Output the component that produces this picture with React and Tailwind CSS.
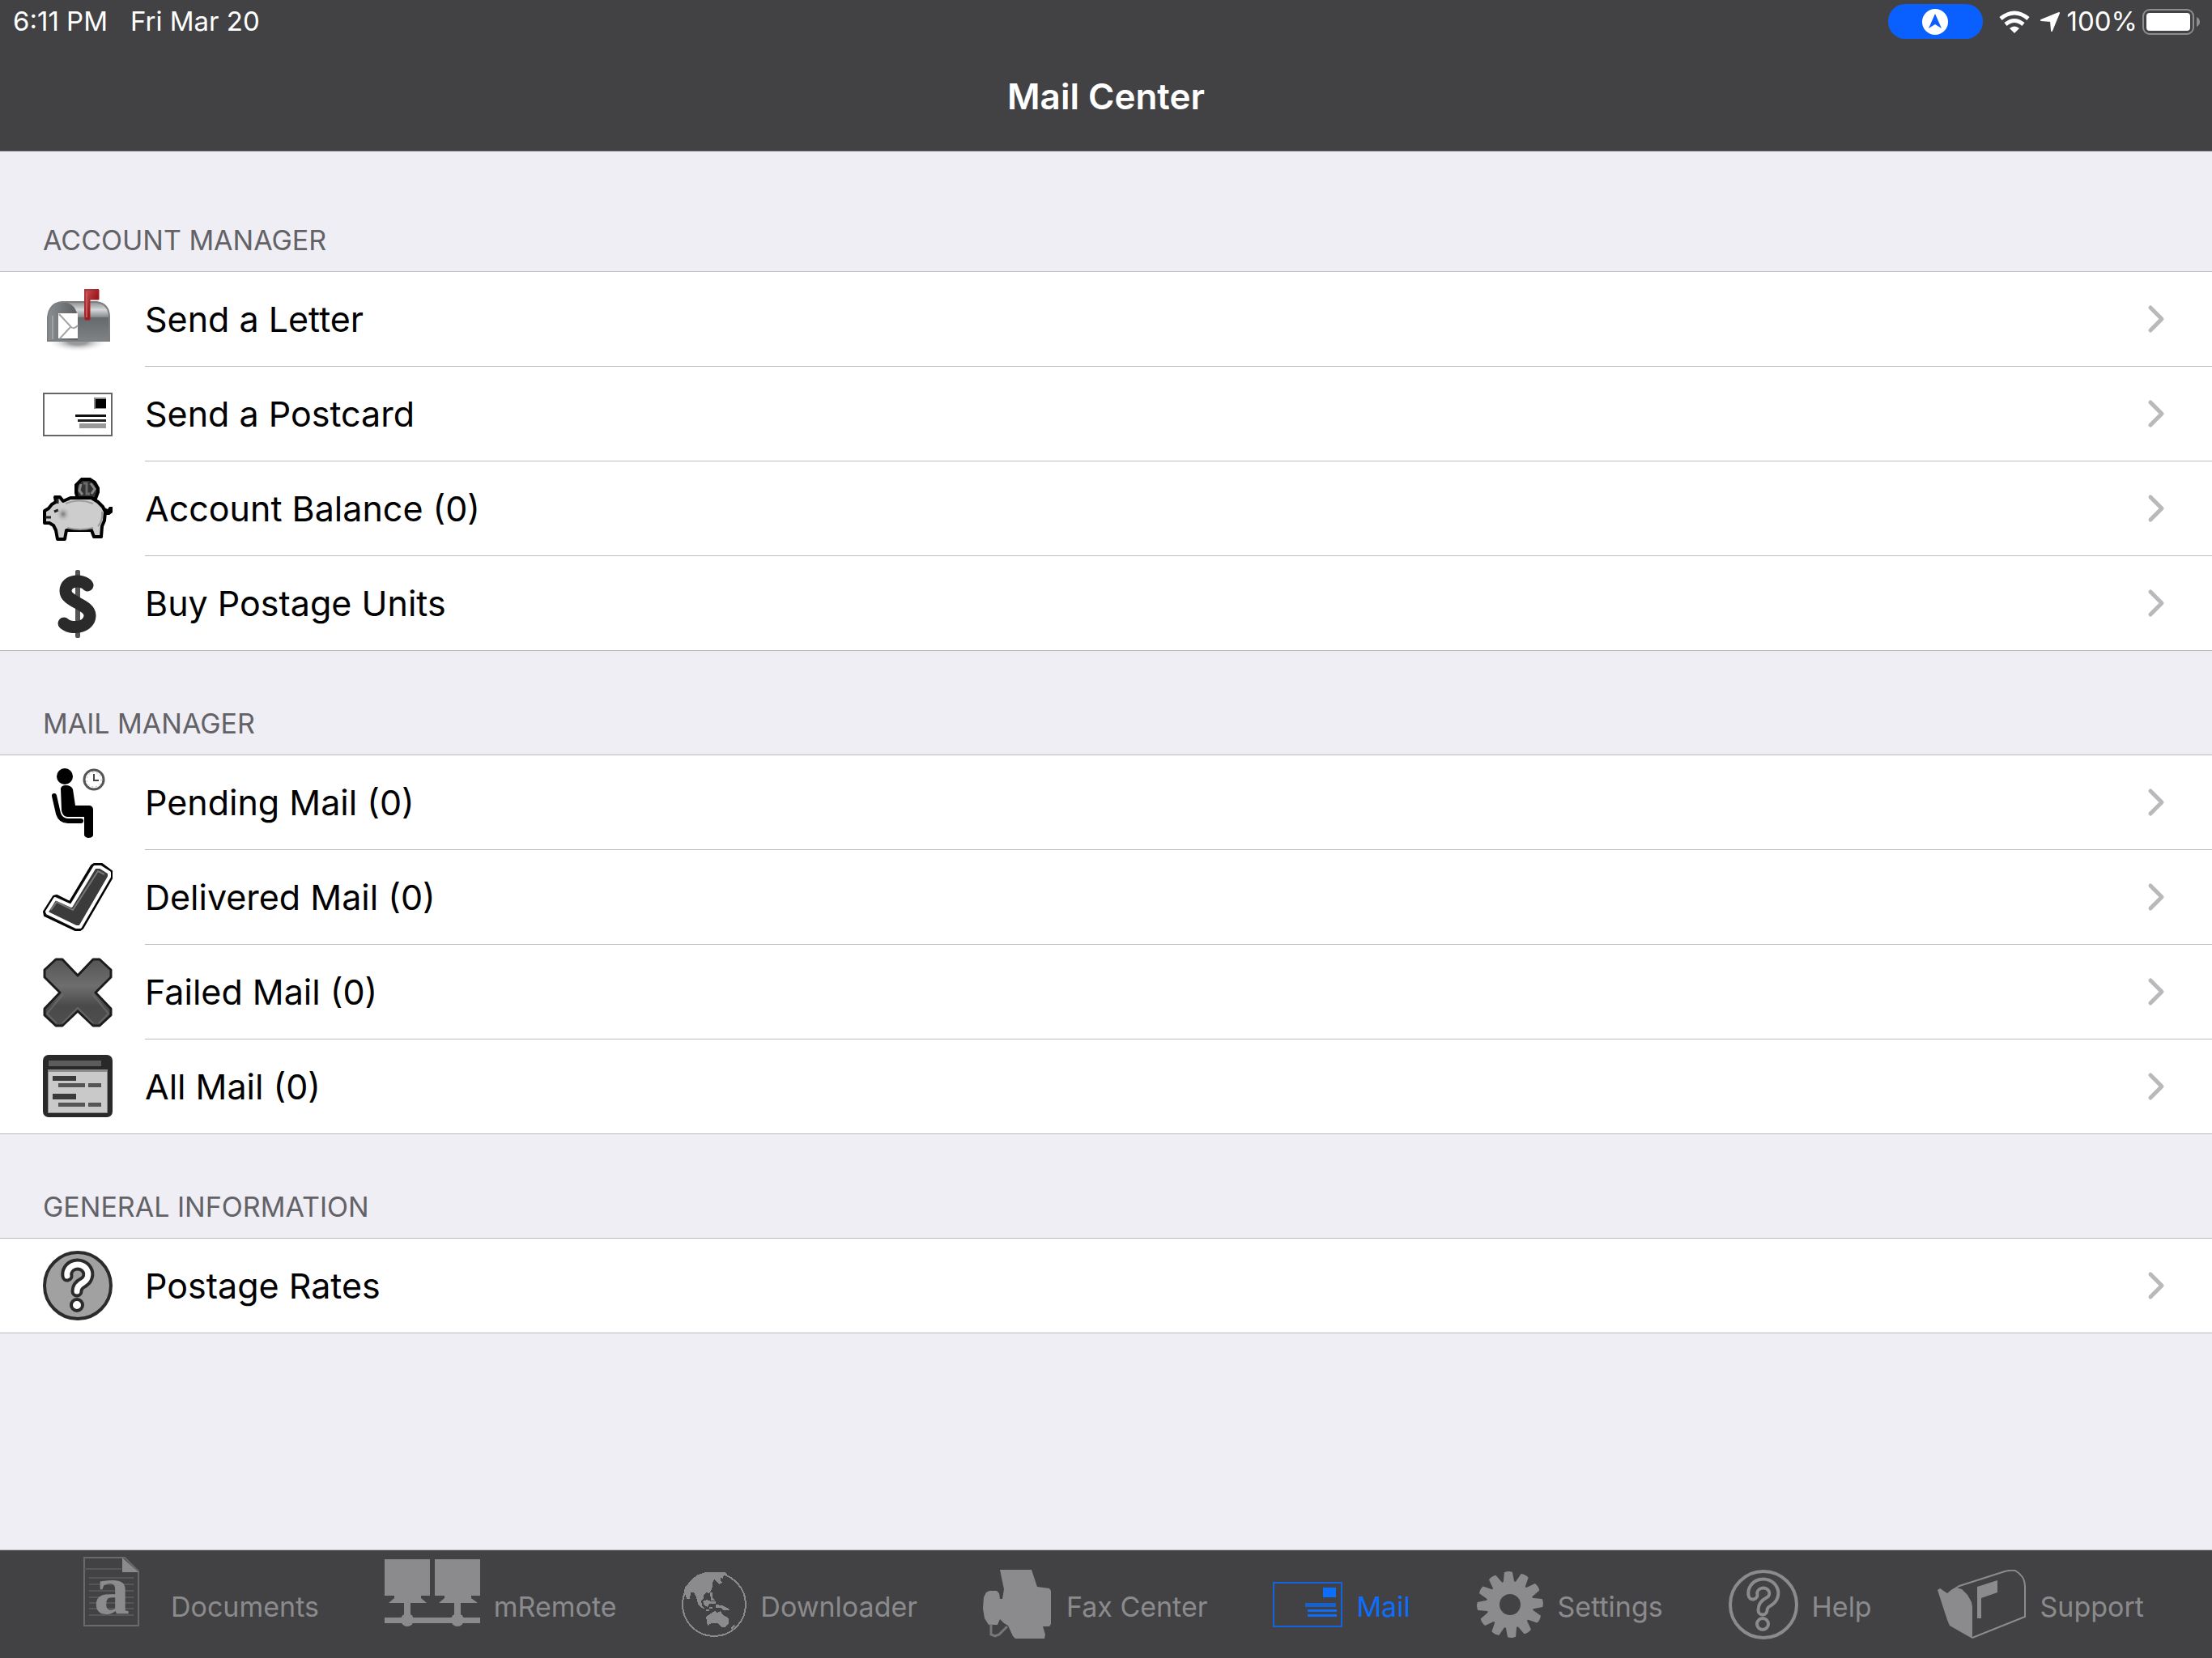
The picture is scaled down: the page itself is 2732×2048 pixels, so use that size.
import React from "react";

/* ---------- Row icons (86 x 86) ---------- */

function MailboxIcon() {
  return (
    <svg viewBox="0 0 86 86" className="size-[86px]" aria-hidden="true">
      <defs>
        <linearGradient id="mbTop" x1="0" y1="0" x2="0" y2="1">
          <stop offset="0" stopColor="#8b8d8f" />
          <stop offset="0.5" stopColor="#d5d7d8" />
          <stop offset="1" stopColor="#85878a" />
        </linearGradient>
        <linearGradient id="mbSide" x1="0" y1="0" x2="0" y2="1">
          <stop offset="0" stopColor="#55585b" />
          <stop offset="1" stopColor="#808386" />
        </linearGradient>
        <linearGradient id="mbDoor" x1="0" y1="0" x2="1" y2="0">
          <stop offset="0" stopColor="#8b8e90" />
          <stop offset="1" stopColor="#5b5e60" />
        </linearGradient>
        <linearGradient id="mbFlag" x1="0" y1="0" x2="1" y2="1">
          <stop offset="0" stopColor="#c9585a" />
          <stop offset="0.6" stopColor="#9c1519" />
          <stop offset="1" stopColor="#b52f31" />
        </linearGradient>
        <radialGradient id="mbShadow">
          <stop offset="0.3" stopColor="#9a9a9a" />
          <stop offset="1" stopColor="#ffffff" stopOpacity="0" />
        </radialGradient>
      </defs>
      <ellipse cx="43" cy="70" rx="38" ry="13" fill="url(#mbShadow)" />
      <path d="M22 21H66Q82 23 82 40V69H38Z" fill="url(#mbSide)" />
      <path d="M24 21H66Q82 23 82 40H40Q38 26 24 21Z" fill="url(#mbTop)" />
      <path d="M6 69V40Q8 22 24 21Q42 22 43 42V69Z" fill="url(#mbDoor)" />
      <path d="M6 69V40Q8 22 24 21H66Q82 23 82 40V69Z" fill="none" stroke="#7d8083" strokeWidth="2" />
      <path d="M19 35H43V66H19Z" fill="#fff" />
      <path d="M20 36L34 51Q38 56 43 50M34 52L21 66" fill="none" stroke="#a5a5a5" strokeWidth="2" />
      <path d="M12 38V67" stroke="#a0a3a5" strokeWidth="2" />
      <path d="M51 5H69V18H58V43H52L51 36Z" fill="url(#mbFlag)" />
      <path d="M54 9V40" stroke="#c9585a" strokeWidth="2" />
      <path d="M51 6H69V18H58V43H52V6" fill="none" stroke="#a0252a" strokeWidth="1" />
    </svg>
  );
}

function PostcardIcon() {
  return (
    <svg viewBox="0 0 86 86" className="size-[86px]" aria-hidden="true">
      <rect x="1" y="17" width="84" height="52" fill="#fff" stroke="#666" strokeWidth="2" />
      <rect x="63" y="22" width="15" height="14" fill="#8a8a8a" />
      <rect x="65" y="24" width="13" height="11" fill="#000" />
      <rect x="40" y="43" width="38" height="3" fill="#111" />
      <rect x="43" y="49" width="35" height="3" fill="#222" />
      <rect x="45" y="54" width="33" height="6" fill="#9a9a9a" />
    </svg>
  );
}

function PiggyIcon() {
  return (
    <svg viewBox="0 0 86 86" className="size-[86px]" aria-hidden="true">
      <defs>
        <radialGradient id="pigCheek">
          <stop offset="0" stopColor="#777" />
          <stop offset="1" stopColor="#cfcfcf" stopOpacity="0" />
        </radialGradient>
      </defs>
      <path d="M48 6H58L64 10L68 17V22L65 30H43L41 23V13Z" fill="#333" stroke="#000" strokeWidth="4" />
      <path d="M47 12L45 20L49 25M59 11L64 18L60 24" fill="none" stroke="#888" strokeWidth="3" />
      <path d="M50 11H54V24H58" fill="none" stroke="#6a6a6a" strokeWidth="3" />
      <path d="M74 40L80 43L82 40H86V47L82 50H76Z" fill="#000" />
      <path
        d="M15 28H21L25 33L34 29H60L68 34L74 40L77 46L76 57L73 64L72 77H63L60 69H29L27 80H18L16 69L13 63L8 60H2V45L7 42L11 37L16 34Z"
        fill="#cdcdcd"
        stroke="#000"
        strokeWidth="4"
        strokeLinejoin="round"
      />
      <path d="M18 30V36M3 53H10M14 46L19 44" stroke="#222" strokeWidth="3" />
      <ellipse cx="25" cy="49" rx="9" ry="10" fill="url(#pigCheek)" />
      <path d="M28 36Q45 29 62 36" fill="none" stroke="#9b9b9b" strokeWidth="2" />
      <path d="M30 66Q46 70 62 66M73 46Q74 58 68 64" fill="none" stroke="#999" strokeWidth="2" />
    </svg>
  );
}

function DollarIcon() {
  return (
    <svg viewBox="0 0 86 86" className="size-[86px]" aria-hidden="true">
      <rect x="40" y="2" width="6" height="84" rx="2" fill="#555" />
      <path
        d="M55 21C50 14 28 13 28 28C28 42 58 44 58 58C58 74 34 76 26 68"
        fill="none"
        stroke="#2a2a2a"
        strokeWidth="15"
        strokeLinecap="round"
      />
    </svg>
  );
}

function WaitingIcon() {
  return (
    <svg viewBox="0 0 86 86" className="size-[86px]" aria-hidden="true">
      <circle cx="27" cy="10" r="10" fill="#000" />
      <path
        d="M22 25Q23 21 28 21Q35 21 37 26L40 46H58Q62 47 62 51V83Q61 86 56 86Q51 85 51 82V60H30Q24 59 23 52Z"
        fill="#000"
      />
      <path
        d="M14 34L19 56Q22 65 31 65H47"
        fill="none"
        stroke="#000"
        strokeWidth="6"
        strokeLinecap="round"
      />
      <circle cx="63" cy="14" r="12" fill="#fff" stroke="#555" strokeWidth="3" />
      <circle cx="63" cy="14" r="9" fill="none" stroke="#bbb" strokeWidth="1" strokeDasharray="2 3" />
      <path d="M63 7V15H69" fill="none" stroke="#444" strokeWidth="2" />
    </svg>
  );
}

function CheckIcon() {
  return (
    <svg viewBox="0 0 86 86" className="size-[86px]" aria-hidden="true">
      <path
        d="M1 60L13 41L17 40L33 48L60 3L63 1H73L85 10V19L49 81L46 83H40L2 65Z"
        fill="#111"
        stroke="#000"
        strokeLinejoin="round"
        strokeWidth="2"
      />
      <path
        d="M5 60L15 44L35 53L64 5H71L82 12V17L46 79H41L6 62Z"
        fill="#3b3b3b"
        stroke="#fff"
        strokeWidth="4"
        strokeLinejoin="round"
      />
      <path d="M10 58L17 48L37 58L68 10L76 14" fill="none" stroke="#777" strokeWidth="2" />
    </svg>
  );
}

function CrossIcon() {
  return (
    <svg viewBox="0 0 86 86" className="size-[86px]" aria-hidden="true">
      <defs>
        <linearGradient id="crossFill" x1="0" y1="0" x2="0" y2="1">
          <stop offset="0" stopColor="#555" />
          <stop offset="0.4" stopColor="#6e6e6e" />
          <stop offset="0.7" stopColor="#4a4a4a" />
          <stop offset="1" stopColor="#4e4e4e" />
        </linearGradient>
      </defs>
      <path
        d="M16 2H24L43 22L62 2H70L84 15V24L65 43L84 63V71L70 84H62L43 66L24 84H16L2 71V63L21 43L2 24V15Z"
        fill="url(#crossFill)"
        stroke="#1c1c1c"
        strokeWidth="3"
        strokeLinejoin="round"
      />
      <path
        d="M17 81L5 69L25 45M69 81L81 69L61 45M24 81L43 62L62 81"
        fill="none"
        stroke="#757575"
        strokeOpacity="0.6"
        strokeWidth="2"
      />
    </svg>
  );
}

function ListWindowIcon() {
  return (
    <svg viewBox="0 0 86 86" className="size-[86px]" aria-hidden="true">
      <rect x="0" y="4" width="86" height="77" rx="7" fill="#292929" />
      <rect x="7" y="11" width="65" height="7" fill="#5c5c5c" />
      <rect x="6" y="22" width="74" height="54" fill="#8a8a8a" />
      <rect x="7" y="25" width="72" height="50" fill="#c9c9c9" />
      <g fill="#3a3a3a">
        <rect x="12" y="30" width="29" height="6" />
        <rect x="12" y="52" width="29" height="7" />
      </g>
      <g fill="#555">
        <rect x="19" y="39" width="33" height="5" />
        <rect x="56" y="39" width="16" height="5" />
        <rect x="19" y="63" width="33" height="5" />
        <rect x="56" y="63" width="16" height="5" />
      </g>
    </svg>
  );
}

function QuestionIcon({ disc, ring, mark }) {
  const hook = "M30 31A13 12 0 1 1 50 39Q42 43 42 50";
  return (
    <svg viewBox="0 0 86 86" className="size-[86px]" aria-hidden="true">
      <circle cx="43" cy="43" r="41" fill={disc} stroke={ring} strokeWidth="4" />
      <g fill="none" strokeLinecap="round" strokeLinejoin="round">
        <path d={hook} stroke={ring} strokeWidth="15" />
        <path d={hook} stroke={mark} strokeWidth="7" />
      </g>
      <circle cx="42" cy="67" r="7" fill={mark} stroke={ring} strokeWidth="4" />
    </svg>
  );
}

/* ---------- Tab icons ---------- */

function DocumentsIcon() {
  return (
    <svg viewBox="0 0 110 118" className="h-[118px] w-[110px] overflow-visible" aria-hidden="true">
      <g transform="translate(19 1)">
        <path d="M1 0V84H68V17L51 0Z" fill="none" stroke="#69696b" strokeWidth="2" />
        <path d="M48 0V18H68Z" fill="#8b8b8d" />
        <path
          d="M1 14H47M7 25H62M7 33H62M7 41H62M7 49H62M7 56H62M7 63H62M7 71H62"
          stroke="#565658"
          strokeWidth="2"
        />
        <text
          x="35"
          y="69"
          textAnchor="middle"
          fill="#8b8b8d"
          className="font-['Liberation_Serif',serif] text-[88px] font-bold"
        >
          a
        </text>
      </g>
    </svg>
  );
}

function NetworkIcon() {
  return (
    <svg viewBox="0 0 118 118" className="size-[118px]" fill="#8b8b8d" aria-hidden="true">
      <g transform="translate(0 1)">
        <path d="M0 2H56V47H45V50L52 56H5L12 50V47H0Z" />
        <path d="M62 2H118V47H107V50L115 56H67L74 50V47H62Z" />
        <rect x="24" y="56" width="8" height="20" />
        <rect x="86" y="56" width="8" height="20" />
        <rect x="0" y="74" width="118" height="7" />
        <ellipse cx="28" cy="77" rx="8" ry="8" />
        <ellipse cx="90" cy="77" rx="8" ry="8" />
      </g>
    </svg>
  );
}

function GlobeIcon() {
  return (
    <svg viewBox="0 0 80 82" className="h-[82px] w-[80px]" fill="#8b8b8d" shapeRendering="crispEdges" aria-hidden="true">
      <circle cx="40" cy="41" r="39" fill="none" stroke="#8b8b8d" strokeWidth="2" />
      <path d="M29 1H53L56 4L51 6V9L48 8V11L50 14L46 16L43 13L40 10L38 14V19L36 24L33 27L30 26L27 30V34L24 36L25 42L28 46L24 45L20 40L18 32L15 26L11 26L10 34L6 34L5 29H2L4 20L12 10L20 4Z" />
      <path d="M35 26H38V32L41 36H36ZM26 37L31 35L36 37H42V40H34L32 44L28 42ZM34 44H38V46H34ZM42 41L50 42L56 45L59 48L52 48L48 45H42ZM30 47H34V49H30Z" />
      <path d="M30 56L36 52L41 49L44 51L48 49L50 53L55 56L58 59V64L54 69H49L45 64L37 64L32 67L31 62Z" />
      <path d="M60 70L64 66L66 67L62 72Z" />
    </svg>
  );
}

function FaxIcon() {
  return (
    <svg viewBox="0 0 86 86" className="size-[86px]" fill="#8b8b8d" aria-hidden="true">
      <path d="M21 0H60L67 21L82 23L84 26V67L82 70H74L77 80L76 85H40L37 82L31 69L26 66L21 61L18 68H7L2 60L0 48L1 34L4 28L8 26L17 26L20 29L21 36H24L26 24Z" />
      <path d="M10 67V80L15 82L20 80L30 70" fill="none" stroke="#77777a" strokeWidth="3" />
    </svg>
  );
}

function MailTabIcon() {
  return (
    <svg viewBox="0 0 86 86" className="size-[86px]" fill="#0d6efd" aria-hidden="true">
      <rect x="1" y="16" width="84" height="54" fill="none" stroke="#1464e0" strokeWidth="2" />
      <rect x="62" y="22" width="16" height="12" />
      <rect x="40" y="41" width="38" height="5" fill="#1760cf" />
      <rect x="43" y="49" width="36" height="3" />
      <rect x="43" y="55" width="36" height="3" />
    </svg>
  );
}

function GearIcon() {
  const teeth = [0, 30, 60, 90, 120, 150, 180, 210, 240, 270, 300, 330];
  return (
    <svg viewBox="0 0 84 84" className="size-[84px]" fill="#8b8b8d" aria-hidden="true">
      <g transform="rotate(-3 42 42)">
        {teeth.map((a) => (
          <path key={a} d="M37 2Q42 0 47 2L49 16H35Z" transform={`rotate(${a} 42 42)`} />
        ))}
      </g>
      <circle cx="42" cy="42" r="21" fill="none" stroke="#8b8b8d" strokeWidth="16" />
    </svg>
  );
}

function SupportIcon() {
  return (
    <svg viewBox="0 0 110 86" className="h-[86px] w-[110px]" fill="#8b8b8d" aria-hidden="true">
      <path d="M0 25L3 23L12 29L17 25L23 22L30 24L37 31L42 40L43 46V85L15 69L12 62Z" />
      <path
        d="M17 26L27 20L80 3Q88 0 96 1Q108 8 108 20V58L43 84"
        fill="none"
        stroke="#8b8b8d"
        strokeWidth="2"
      />
      <path d="M49 21L74 13V28L54 35V60H49Z" />
    </svg>
  );
}

/* ---------- Data ---------- */

const sections = [
  {
    title: "ACCOUNT MANAGER",
    rows: [
      { label: "Send a Letter", icon: <MailboxIcon /> },
      { label: "Send a Postcard", icon: <PostcardIcon /> },
      { label: "Account Balance (0)", icon: <PiggyIcon /> },
      { label: "Buy Postage Units", icon: <DollarIcon /> },
    ],
  },
  {
    title: "MAIL MANAGER",
    rows: [
      { label: "Pending Mail (0)", icon: <WaitingIcon /> },
      { label: "Delivered Mail (0)", icon: <CheckIcon /> },
      { label: "Failed Mail (0)", icon: <CrossIcon /> },
      { label: "All Mail (0)", icon: <ListWindowIcon /> },
    ],
  },
  {
    title: "GENERAL INFORMATION",
    rows: [
      {
        label: "Postage Rates",
        icon: <QuestionIcon disc="#a1a1a1" ring="#2b2b2b" mark="#ffffff" />,
      },
    ],
  },
];

const tabs = [
  { label: "Documents", icon: <DocumentsIcon /> },
  { label: "mRemote", icon: <NetworkIcon /> },
  { label: "Downloader", icon: <GlobeIcon /> },
  { label: "Fax Center", icon: <FaxIcon /> },
  { label: "Mail", icon: <MailTabIcon />, active: true },
  { label: "Settings", icon: <GearIcon /> },
  { label: "Help", icon: <QuestionIcon disc="#424244" ring="#8b8b8d" mark="#424244" /> },
  { label: "Support", icon: <SupportIcon /> },
];

/* ---------- Layout ---------- */

function StatusBar() {
  return (
    <div className="flex h-[53px] items-center justify-between pr-[14px] pl-4 text-[33px] leading-none">
      <div className="flex gap-7">
        <span>6:11 PM</span>
        <span>Fri Mar 20</span>
      </div>
      <div className="flex items-center">
        <span className="mr-5 flex h-[43px] w-[117px] items-center justify-center rounded-[21px] bg-[#0a60ff]">
          <svg viewBox="0 0 32 32" className="size-8" aria-hidden="true">
            <circle cx="16" cy="16" r="16" fill="#fff" />
            <path d="M16 6L24 24L16 19L8 24Z" fill="#0a60ff" />
          </svg>
        </span>
        <svg viewBox="0 0 38 28" className="mr-3 h-7 w-[38px]" aria-hidden="true">
          <g fill="none" stroke="#fff" strokeWidth="5">
            <path d="M2 10Q19 -4 36 10" />
            <path d="M8 17Q19 8 30 17" />
          </g>
          <path d="M13 22Q19 17 25 22L19 28Z" fill="#fff" />
        </svg>
        <svg viewBox="0 0 26 26" className="mr-2 size-[26px]" aria-hidden="true">
          <path
            d="M24 2L15 24L14 12L2 11Z"
            fill="#fff"
            stroke="#fff"
            strokeWidth="2"
            strokeLinejoin="round"
          />
        </svg>
        <span className="mr-[6px]">100%</span>
        <svg viewBox="0 0 72 32" className="h-8 w-[72px]" aria-hidden="true">
          <rect x="1" y="1" width="62" height="30" rx="8" fill="none" stroke="#8e8e90" strokeWidth="2" />
          <rect x="5" y="5" width="54" height="22" rx="4" fill="#fff" />
          <path d="M67 10Q71 12 71 16Q71 20 67 22Z" fill="#8e8e90" />
        </svg>
      </div>
    </div>
  );
}

function Row({ label, icon, first, last }) {
  return (
    <li className={first ? "h-[118px] border-t border-[#bcbbc1]" : "h-[117px]"}>
      <button
        type="button"
        className={
          last
            ? "flex h-full w-full items-center border-b border-[#bcbbc1] text-left"
            : "flex h-full w-full items-center text-left"
        }
      >
        <span className="mr-10 ml-[53px] flex shrink-0">{icon}</span>
        <span
          className={
            last
              ? "flex h-full flex-1 items-center justify-between pr-[58px]"
              : "flex h-full flex-1 items-center justify-between border-b border-[#bcbbc1] pr-[58px]"
          }
        >
          <span className="text-[43px] leading-none">{label}</span>
          <svg viewBox="0 0 22 36" className="h-9 w-[22px]" aria-hidden="true">
            <path
              d="M4 4L18 18L4 32"
              fill="none"
              stroke="#b9b9bb"
              strokeWidth="5"
              strokeLinecap="round"
              strokeLinejoin="round"
            />
          </svg>
        </span>
      </button>
    </li>
  );
}

export default function App() {
  return (
    <div className="flex min-h-screen flex-col bg-[#efeef4] font-['Inter','Liberation_Sans',sans-serif] text-black">
      <header className="h-[187px] border-b border-[#5f5f62] bg-[#424244] text-white">
        <StatusBar />
        <h1 className="pt-10 text-center text-[44px] leading-[52px] font-semibold">Mail Center</h1>
      </header>

      <main className="flex-1 pt-5">
        {sections.map((section) => (
          <section key={section.title}>
            <h2 className="flex h-32 items-end pb-[18px] pl-[53px] text-[34px] leading-10 text-[#626267]">
              {section.title}
            </h2>
            <ul className="bg-white">
              {section.rows.map((row, i) => (
                <Row
                  key={row.label}
                  label={row.label}
                  icon={row.icon}
                  first={i === 0}
                  last={i === section.rows.length - 1}
                />
              ))}
            </ul>
          </section>
        ))}
      </main>

      <nav
        aria-label="Main"
        className="flex h-[134px] items-center justify-between border-t border-[#b5b5ba] bg-[#424244] px-[84px] text-[34px] leading-none text-[#8b8b8d]"
      >
        {tabs.map((tab) => (
          <button
            key={tab.label}
            type="button"
            aria-current={tab.active ? "page" : undefined}
            className={
              tab.active
                ? "flex items-center gap-[17px] text-[#0d6efd]"
                : "flex items-center gap-[17px]"
            }
          >
            {tab.icon}
            <span className="pt-[6px]">{tab.label}</span>
          </button>
        ))}
      </nav>
    </div>
  );
}
